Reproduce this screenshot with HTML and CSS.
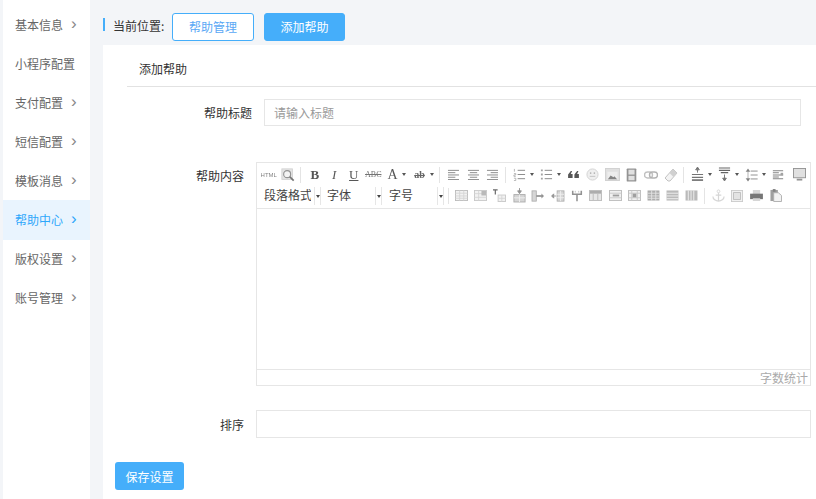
FILE: index.html
```html
<!DOCTYPE html>
<html lang="zh-CN">
<head>
    <meta charset="UTF-8">
    <title>添加帮助</title>
    <link rel="stylesheet" href="styles.css">
</head>
<body>
    <svg class="defs" width="0" height="0">
        <symbol id="i-search" viewBox="0 0 16 16"><rect x="1" y="1" width="12" height="12" fill="#e2e2e2" stroke="#ccc"/><circle cx="7" cy="7" r="4" fill="#f2f2f2" stroke="#888" stroke-width="1.300"/><path d="M10 10l4.500 4.500" stroke="#666" stroke-width="2"/></symbol>
        <symbol id="i-left" viewBox="0 0 14 12"><path d="M1 1.500h12M1 4h8M1 6.500h12M1 9h8M1 11.500h12" stroke="#777"/></symbol>
        <symbol id="i-center" viewBox="0 0 14 12"><path d="M1 1.500h12M3 4h8M1 6.500h12M3 9h8M1 11.500h12" stroke="#777"/></symbol>
        <symbol id="i-right" viewBox="0 0 14 12"><path d="M1 1.500h12M5 4h8M1 6.500h12M5 9h8M1 11.500h12" stroke="#777"/></symbol>
        <symbol id="i-ol" viewBox="0 0 14 14"><path d="M5 2.500h8M5 7h8M5 11.500h8" stroke="#777"/><path d="M1.500 1v3M1 6h2v1.500H1V9h2M1 11h2v2.500H1" stroke="#999" fill="none" stroke-width=".8"/></symbol>
        <symbol id="i-ul" viewBox="0 0 14 14"><path d="M5 2.500h8M5 7h8M5 11.500h8" stroke="#777"/><path d="M1 1.500h2v2H1zM1 6h2v2H1zM1 10.500h2v2H1z" fill="#999"/></symbol>
        <symbol id="i-quote" viewBox="0 0 14 10"><path d="M1 5l3-4h1.500L4 4.500h2V9H1zM8 5l3-4h1.500L11 4.500h2V9H8z" fill="#444"/></symbol>
        <symbol id="i-smile" viewBox="0 0 14 14"><circle cx="7" cy="7" r="6" fill="#eee" stroke="#ccc"/><circle cx="5" cy="5.500" r=".9" fill="#aaa"/><circle cx="9" cy="5.500" r=".9" fill="#aaa"/><path d="M4 9h6" stroke="#bbb"/></symbol>
        <symbol id="i-image" viewBox="0 0 16 14"><rect x=".5" y=".5" width="15" height="13" fill="#ddd" stroke="#ccc"/><rect x="2.500" y="4" width="11" height="8" fill="#ececec"/><path d="M3 12l3-4 3 2 1-1 3 3z" fill="#777"/></symbol>
        <symbol id="i-film" viewBox="0 0 12 16"><rect x=".5" y=".5" width="11" height="15" rx="1" fill="#888"/><rect x="2.500" y="2" width="7" height="5.500" fill="#ddd"/><rect x="2.500" y="9" width="7" height="5" fill="#ddd"/></symbol>
        <symbol id="i-link" viewBox="0 0 14 8"><rect x=".5" y="1" width="8" height="6" rx="3" fill="none" stroke="#bbb" stroke-width="1.400"/><rect x="5.500" y="1" width="8" height="6" rx="3" fill="none" stroke="#aaa" stroke-width="1.400"/></symbol>
        <symbol id="i-eraser" viewBox="0 0 14 14"><path d="M9 1l4 4-7 8H4L1 10z" fill="#f2f2f2" stroke="#bbb"/><path d="M9 1l4 4-3.500 4-4-4z" fill="#ccc"/></symbol>
        <symbol id="i-rowspace" viewBox="0 0 14 16"><path d="M7 0l2 3H5zM7 3v3" fill="#666" stroke="#666"/><path d="M1 8h12M1 11h12" stroke="#666" stroke-width="1.300"/><path d="M1 14h12" stroke="#444" stroke-width="1.500"/></symbol>
        <symbol id="i-rowtop" viewBox="0 0 14 16"><path d="M1 1h12M1 3.500h12M3 6h8" stroke="#555" stroke-width="1.300"/><path d="M7 8v5M5 12l2 3 2-3z" fill="#666" stroke="#666"/></symbol>
        <symbol id="i-lineheight" viewBox="0 0 14 16"><path d="M6 3.500h8M6 8h8M6 12.500h8" stroke="#777"/><path d="M3 1l2 3H1zM3 15l2-3H1zM3 4v8" fill="#666" stroke="#888" stroke-width=".8"/></symbol>
        <symbol id="i-para" viewBox="0 0 14 12"><path d="M1 1.500h12M1 4h7M1 6.500h12M1 9h7M1 11h12" stroke="#777" stroke-width="1.200"/><path d="M10 4h3v3h-3z" fill="#999"/></symbol>
        <symbol id="i-screen" viewBox="0 0 14 14"><rect x=".5" y=".5" width="13" height="10" fill="#ddd" stroke="#888"/><path d="M4 12.500h6" stroke="#888" stroke-width="2"/></symbol>
        <symbol id="i-table" viewBox="0 0 14 12"><rect x=".5" y=".5" width="13" height="11" fill="#f0f0f0" stroke="#aaa"/><path d="M.5 3.500h13M.5 6.500h13M.5 9h13M5 .5v11M9.500 .5v11" stroke="#ccc"/></symbol>
        <symbol id="i-tablex" viewBox="0 0 14 12"><rect x=".5" y=".5" width="13" height="11" fill="#f0f0f0" stroke="#bbb"/><path d="M.5 4h13M.5 8h13M5 .5v11" stroke="#ccc"/><rect x="8" y="1" width="5" height="5" fill="#aaa"/></symbol>
        <symbol id="i-tabtext" viewBox="0 0 14 14"><path d="M0 1h5M2.500 1v5" stroke="#444" stroke-width="1.300"/><rect x="5.500" y="6.500" width="8" height="7" fill="#f0f0f0" stroke="#bbb"/><path d="M5.500 10h8M9.500 6.500v7" stroke="#ccc"/></symbol>
        <symbol id="i-rowins" viewBox="0 0 14 16"><path d="M7 0v5M5 3l2 3 2-3z" stroke="#777" fill="#777"/><rect x="1" y="7" width="12" height="8" fill="#ccc" stroke="#999"/><path d="M1 10.500h12M7 7v8" stroke="#eee"/></symbol>
        <symbol id="i-coldel" viewBox="0 0 16 14"><rect x="1" y="1" width="5" height="12" fill="#ccc" stroke="#999"/><path d="M6 7h7" stroke="#777" stroke-width="2"/><path d="M12 4l3 3-3 3z" fill="#777"/></symbol>
        <symbol id="i-colins" viewBox="0 0 16 14"><rect x="7" y="1" width="8" height="12" fill="#ccc" stroke="#999"/><path d="M7 5h8M7 9h8M11 1v12" stroke="#eee"/><path d="M1 7h5M3 4.500L.5 7 3 9.500z" stroke="#777" fill="#777"/></symbol>
        <symbol id="i-split" viewBox="0 0 14 14"><path d="M2 1v4h10V1M7 5v8" stroke="#777" stroke-width="1.800" fill="none"/><path d="M5 1v2M9 1v2" stroke="#aaa"/></symbol>
        <symbol id="i-cellh" viewBox="0 0 14 12"><rect x=".5" y=".5" width="13" height="11" fill="#e2e2e2" stroke="#aaa"/><rect x="1" y="1" width="12" height="3" fill="#999"/><path d="M4.500 4v7M9.500 4v7" stroke="#aaa"/></symbol>
        <symbol id="i-cellm" viewBox="0 0 14 12"><rect x=".5" y=".5" width="13" height="11" fill="#eee" stroke="#aaa"/><path d="M.5 3.500h13M.5 8.500h13" stroke="#bbb"/><path d="M4 6h7" stroke="#888" stroke-width="2"/></symbol>
        <symbol id="i-cellc" viewBox="0 0 14 12"><rect x=".5" y=".5" width="13" height="11" fill="#eee" stroke="#aaa"/><path d="M.5 3.500h13M.5 8.500h13M4 .5v11M10 .5v11" stroke="#bbb"/><rect x="5" y="4" width="4" height="4" fill="#888"/></symbol>
        <symbol id="i-grid" viewBox="0 0 14 12"><rect x=".5" y=".5" width="13" height="11" fill="#999"/><path d="M.5 3.500h13M.5 6.500h13M.5 9h13M5 .5v11M9.500 .5v11" stroke="#ddd"/></symbol>
        <symbol id="i-rows" viewBox="0 0 14 12"><rect x=".5" y=".5" width="13" height="11" fill="#aaa"/><path d="M.5 3.500h13M.5 6.500h13M.5 9.500h13" stroke="#eee"/></symbol>
        <symbol id="i-cols" viewBox="0 0 14 12"><rect x=".5" y=".5" width="13" height="11" fill="#aaa"/><path d="M3.500 .5v11M6.500 .5v11M9.500 .5v11" stroke="#eee"/></symbol>
        <symbol id="i-anchor" viewBox="0 0 14 14"><circle cx="7" cy="2.500" r="1.500" fill="none" stroke="#ccc"/><path d="M7 4v9M4 6.500h6M1 8c0 3 3 5 6 5s6-2 6-5" stroke="#ccc" fill="none" stroke-width="1.300"/></symbol>
        <symbol id="i-pic" viewBox="0 0 14 14"><rect x=".5" y=".5" width="13" height="13" fill="#eee" stroke="#bbb"/><rect x="3" y="3" width="8" height="8" fill="#ddd" stroke="#aaa"/></symbol>
        <symbol id="i-print" viewBox="0 0 14 12"><path d="M3 0h8v5H3z" fill="#ccc"/><path d="M0 4h14v6H0z" fill="#555"/><path d="M3 9h8v3H3z" fill="#ccc"/></symbol>
        <symbol id="i-paste" viewBox="0 0 13 14"><rect x=".5" y="1" width="8" height="12" fill="#888"/><rect x="3" y="0" width="3" height="3" fill="#666"/><path d="M4 4h5l3.500 3v6.500H4z" fill="#f0f0f0" stroke="#999"/></symbol>
    </svg>

    <div class="layout">
        <ul class="side">
            <li class="side-item">基本信息<span class="chev">›</span></li>
            <li class="side-item">小程序配置</li>
            <li class="side-item">支付配置<span class="chev">›</span></li>
            <li class="side-item">短信配置<span class="chev">›</span></li>
            <li class="side-item">模板消息<span class="chev">›</span></li>
            <li class="side-item active">帮助中心<span class="chev">›</span></li>
            <li class="side-item">版权设置<span class="chev">›</span></li>
            <li class="side-item">账号管理<span class="chev">›</span></li>
        </ul>

        <div class="main">
            <div class="crumb">
                <span class="crumb-title">当前位置:</span>
                <a class="btn btn-line">帮助管理</a>
                <a class="btn btn-fill">添加帮助</a>
            </div>

            <div class="panel">
                <div class="panel-head">添加帮助</div>

                <div class="row row-title">
                    <label class="row-label wide">帮助标题</label>
                    <input class="text-input title-input" type="text" placeholder="请输入标题">
                </div>

                <div class="row row-editor">
                    <label class="row-label">帮助内容</label>
                    <div class="editor">
                        <div class="toolbar">
                            <div class="tb-row">
                                <span class="ic t-html">HTML</span>
                                <span class="ic"><svg width="14" height="14"><use href="#i-search"/></svg></span>
                                <i class="sep"></i>
                                <span class="ic t-b">B</span>
                                <span class="ic t-i">I</span>
                                <span class="ic t-u">U</span>
                                <span class="ic t-s">ABC</span>
                                <span class="ic drop t-a">A<i class="caret"></i></span>
                                <span class="ic drop"><span class="t-bg">ab</span><i class="caret"></i></span>
                                <i class="sep"></i>
                                <span class="ic"><svg width="13" height="11"><use href="#i-left"/></svg></span>
                                <span class="ic"><svg width="13" height="11"><use href="#i-center"/></svg></span>
                                <span class="ic"><svg width="13" height="11"><use href="#i-right"/></svg></span>
                                <i class="sep"></i>
                                <span class="ic drop"><svg width="13" height="13"><use href="#i-ol"/></svg><i class="caret"></i></span>
                                <span class="ic drop"><svg width="13" height="13"><use href="#i-ul"/></svg><i class="caret"></i></span>
                                <span class="ic"><svg width="13" height="9"><use href="#i-quote"/></svg></span>
                                <span class="ic"><svg width="13" height="13"><use href="#i-smile"/></svg></span>
                                <span class="ic"><svg width="15" height="13"><use href="#i-image"/></svg></span>
                                <span class="ic"><svg width="11" height="14"><use href="#i-film"/></svg></span>
                                <span class="ic"><svg width="14" height="8"><use href="#i-link"/></svg></span>
                                <span class="ic"><svg width="14" height="14"><use href="#i-eraser"/></svg></span>
                                <i class="sep"></i>
                                <span class="ic drop"><svg width="13" height="15"><use href="#i-rowspace"/></svg><i class="caret"></i></span>
                                <span class="ic drop"><svg width="13" height="15"><use href="#i-rowtop"/></svg><i class="caret"></i></span>
                                <span class="ic drop"><svg width="13" height="14"><use href="#i-lineheight"/></svg><i class="caret"></i></span>
                                <span class="ic"><svg width="12" height="11"><use href="#i-para"/></svg></span>
                                <span class="ic last"><svg width="13" height="13"><use href="#i-screen"/></svg></span>
                            </div>
                            <div class="tb-row tb-row2">
                                <span class="combo c-para"><b>段落格式</b><i class="combo-arrow"></i></span>
                                <span class="combo c-font"><b>字体</b><i class="combo-arrow"></i></span>
                                <span class="combo c-size"><b>字号</b><i class="combo-arrow"></i></span>
                                <i class="sep"></i>
                                <span class="ic"><svg width="13" height="11"><use href="#i-table"/></svg></span>
                                <span class="ic"><svg width="13" height="11"><use href="#i-tablex"/></svg></span>
                                <span class="ic"><svg width="13" height="13"><use href="#i-tabtext"/></svg></span>
                                <span class="ic"><svg width="13" height="15"><use href="#i-rowins"/></svg></span>
                                <span class="ic"><svg width="14" height="12"><use href="#i-coldel"/></svg></span>
                                <span class="ic"><svg width="14" height="12"><use href="#i-colins"/></svg></span>
                                <span class="ic"><svg width="12" height="12"><use href="#i-split"/></svg></span>
                                <span class="ic"><svg width="13" height="11"><use href="#i-cellh"/></svg></span>
                                <span class="ic"><svg width="13" height="11"><use href="#i-cellm"/></svg></span>
                                <span class="ic"><svg width="13" height="11"><use href="#i-cellc"/></svg></span>
                                <span class="ic"><svg width="13" height="11"><use href="#i-grid"/></svg></span>
                                <span class="ic"><svg width="13" height="11"><use href="#i-rows"/></svg></span>
                                <span class="ic"><svg width="13" height="11"><use href="#i-cols"/></svg></span>
                                <i class="sep"></i>
                                <span class="ic"><svg width="13" height="13"><use href="#i-anchor"/></svg></span>
                                <span class="ic"><svg width="12" height="12"><use href="#i-pic"/></svg></span>
                                <span class="ic"><svg width="13" height="11"><use href="#i-print"/></svg></span>
                                <span class="ic"><svg width="12" height="13"><use href="#i-paste"/></svg></span>
                            </div>
                        </div>
                        <div class="editor-body"></div>
                        <div class="editor-foot">字数统计</div>
                    </div>
                </div>

                <div class="row row-sort">
                    <label class="row-label">排序</label>
                    <input class="text-input sort-input" type="text">
                </div>

                <button class="save-btn">保存设置</button>
            </div>
        </div>
    </div>
</body>
</html>
```

FILE: styles.css
```css
* {
    box-sizing: border-box;
}
html, body {
    margin: 0;
    height: 499px;
    overflow: hidden;
}
body {
    background-color: #f3f5f8;
    color: #333;
    font-family: "Noto Sans CJK SC", "Noto Sans", sans-serif;
    font-size: 12px;
}
.defs {
    position: absolute;
}
.layout {
    display: flex;
    height: 499px;
}

/* sidebar */
.side {
    list-style: none;
    margin: 0 0 0 3px;
    padding: 5px 0 0;
    width: 87px;
    background: #fff;
}
.side-item {
    display: flex;
    align-items: center;
    height: 39.1px;
    padding: 0 0 1px 12px;
    color: #666;
}
.side-item.active {
    background: #e9f4fe;
    color: #2ea7fb;
}
.chev {
    margin-left: 8px;
    font-size: 17px;
    line-height: 1;
    color: #888;
    font-family: "Liberation Sans", sans-serif;
    position: relative;
    top: -1px;
}
.active .chev {
    color: #2ea7fb;
}

/* main */
.main {
    flex: 1;
    margin-left: 13px;
    min-width: 0;
}
.crumb {
    display: flex;
    align-items: flex-start;
    height: 45px;
    padding-top: 13px;
}
.crumb-title {
    border-left: 2px solid #45aefa;
    padding-left: 8px;
    width: 69px;
    height: 13px;
    margin-top: 5px;
    line-height: 15px;
    color: #333;
}
.btn {
    display: block;
    width: 82px;
    height: 28px;
    line-height: 26px;
    text-align: center;
    border-radius: 3px;
    border: 1px solid #45aefa;
}
.btn-line {
    background: #fff;
    color: #5aa8f5;
}
.btn-fill {
    width: 81px;
    margin-left: 10px;
    background: #45aefa;
    color: #fff;
}
.panel {
    background: #fff;
    height: 454px;
    padding-left: 12px;
}
.panel-head {
    height: 42px;
    line-height: 47px;
    margin-left: 12px;
    padding-left: 12px;
    border-bottom: 1px solid #e2e2e2;
    color: #333;
}

/* form */
.row {
    display: flex;
    align-items: flex-start;
}
.row-label {
    width: 129px;
    margin-right: 12px;
    text-align: right;
    color: #333;
}
.row-label.wide {
    width: 137px;
}
.row-title {
    margin-top: 12px;
    align-items: center;
}
.text-input {
    display: block;
    height: 27px;
    padding: 0 9px;
    border: 1px solid #e6e6e6;
    font-family: inherit;
    font-size: 12px;
    outline: none;
}
.text-input::placeholder {
    color: #9a9a9a;
}
.title-input {
    width: 537px;
}
.sort-input {
    width: 555px;
    height: 28px;
}
.row-editor {
    margin-top: 36px;
}
.row-editor .row-label {
    padding-top: 5px;
}
.row-sort {
    margin-top: 24px;
    align-items: center;
}
.save-btn {
    display: block;
    margin-top: 24px;
    width: 69px;
    height: 28px;
    padding: 0;
    border: none;
    border-radius: 3px;
    background: #45aefa;
    color: #fff;
    font-family: inherit;
    font-size: 12px;
}

/* editor */
.editor {
    width: 555px;
    height: 224px;
    border: 1px solid #e6e6e6;
    display: flex;
    flex-direction: column;
}
.toolbar {
    height: 46px;
    padding: 1px 0 0 2px;
    border-bottom: 1px solid #e6e6e6;
}
.tb-row {
    display: flex;
    align-items: center;
    height: 21px;
}
.ic {
    flex: none;
    display: flex;
    align-items: center;
    justify-content: center;
    width: 19.5px;
    height: 20px;
    color: #444;
    filter: blur(.45px);
    opacity: .9;
}
.ic.drop {
    width: 27px;
    gap: 4px;
}
.ic.last {
    margin-left: 2px;
}
.sep {
    flex: none;
    width: 1px;
    height: 16px;
    margin: 0 4px 0 2px;
    background: #e4e4e4;
}
.caret {
    width: 0;
    height: 0;
    border: 2.5px solid transparent;
    border-top: 3px solid #444;
    border-bottom: 0;
}
.t-html {
    font: 6px "Liberation Sans", sans-serif;
    color: #777;
}
.t-b, .t-i, .t-u, .t-a, .t-s {
    font-family: "Liberation Serif", serif;
    font-size: 13px;
}
.t-b {
    font-weight: bold;
}
.t-i {
    font-style: italic;
}
.t-u {
    text-decoration: underline;
}
.t-s {
    font-size: 8px;
    text-decoration: line-through;
    color: #666;
}
.t-a {
    font-size: 14px;
}
.t-bg {
    width: 13px;
    text-align: center;
    font: bold 10px "Liberation Serif", serif;
    color: #555;
    text-decoration: line-through;
}
.tb-row2 {
    padding-left: 3px;
}
.tb-row2 .sep {
    margin: 0 3px;
}
.tb-row2 .ic {
    width: 19.2px;
    opacity: .8;
}
.combo {
    flex: none;
    display: flex;
    align-items: center;
    height: 18px;
    margin-right: 1px;
}
.combo b {
    display: block;
    flex: 1;
    height: 18px;
    padding-left: 2px;
    overflow: hidden;
    white-space: nowrap;
    font-weight: normal;
    line-height: 16px;
    color: #444;
    font-size: 12px;
}
.combo-arrow {
    position: relative;
    display: block;
    width: 7px;
    height: 18px;
    border-left: 1px solid #e6e6e6;
    border-right: 1px solid #e6e6e6;
}
.combo-arrow::after {
    content: "";
    position: absolute;
    left: 1px;
    top: 8px;
    border: 2px solid transparent;
    border-top: 3px solid #444;
    border-bottom: 0;
}
.c-para {
    width: 59px;
}
.c-para b {
    margin-right: 3px;
}
.c-font {
    width: 60px;
    margin-right: 2px;
}
.c-font b {
    padding-left: 5px;
}
.c-size {
    width: 60px;
}
.c-size b {
    padding-left: 5px;
}
.editor-body {
    flex: 1;
}
.editor-foot {
    height: 16px;
    line-height: 15px;
    padding-right: 2px;
    text-align: right;
    border-top: 1px solid #e6e6e6;
    color: #aaa;
}
```
